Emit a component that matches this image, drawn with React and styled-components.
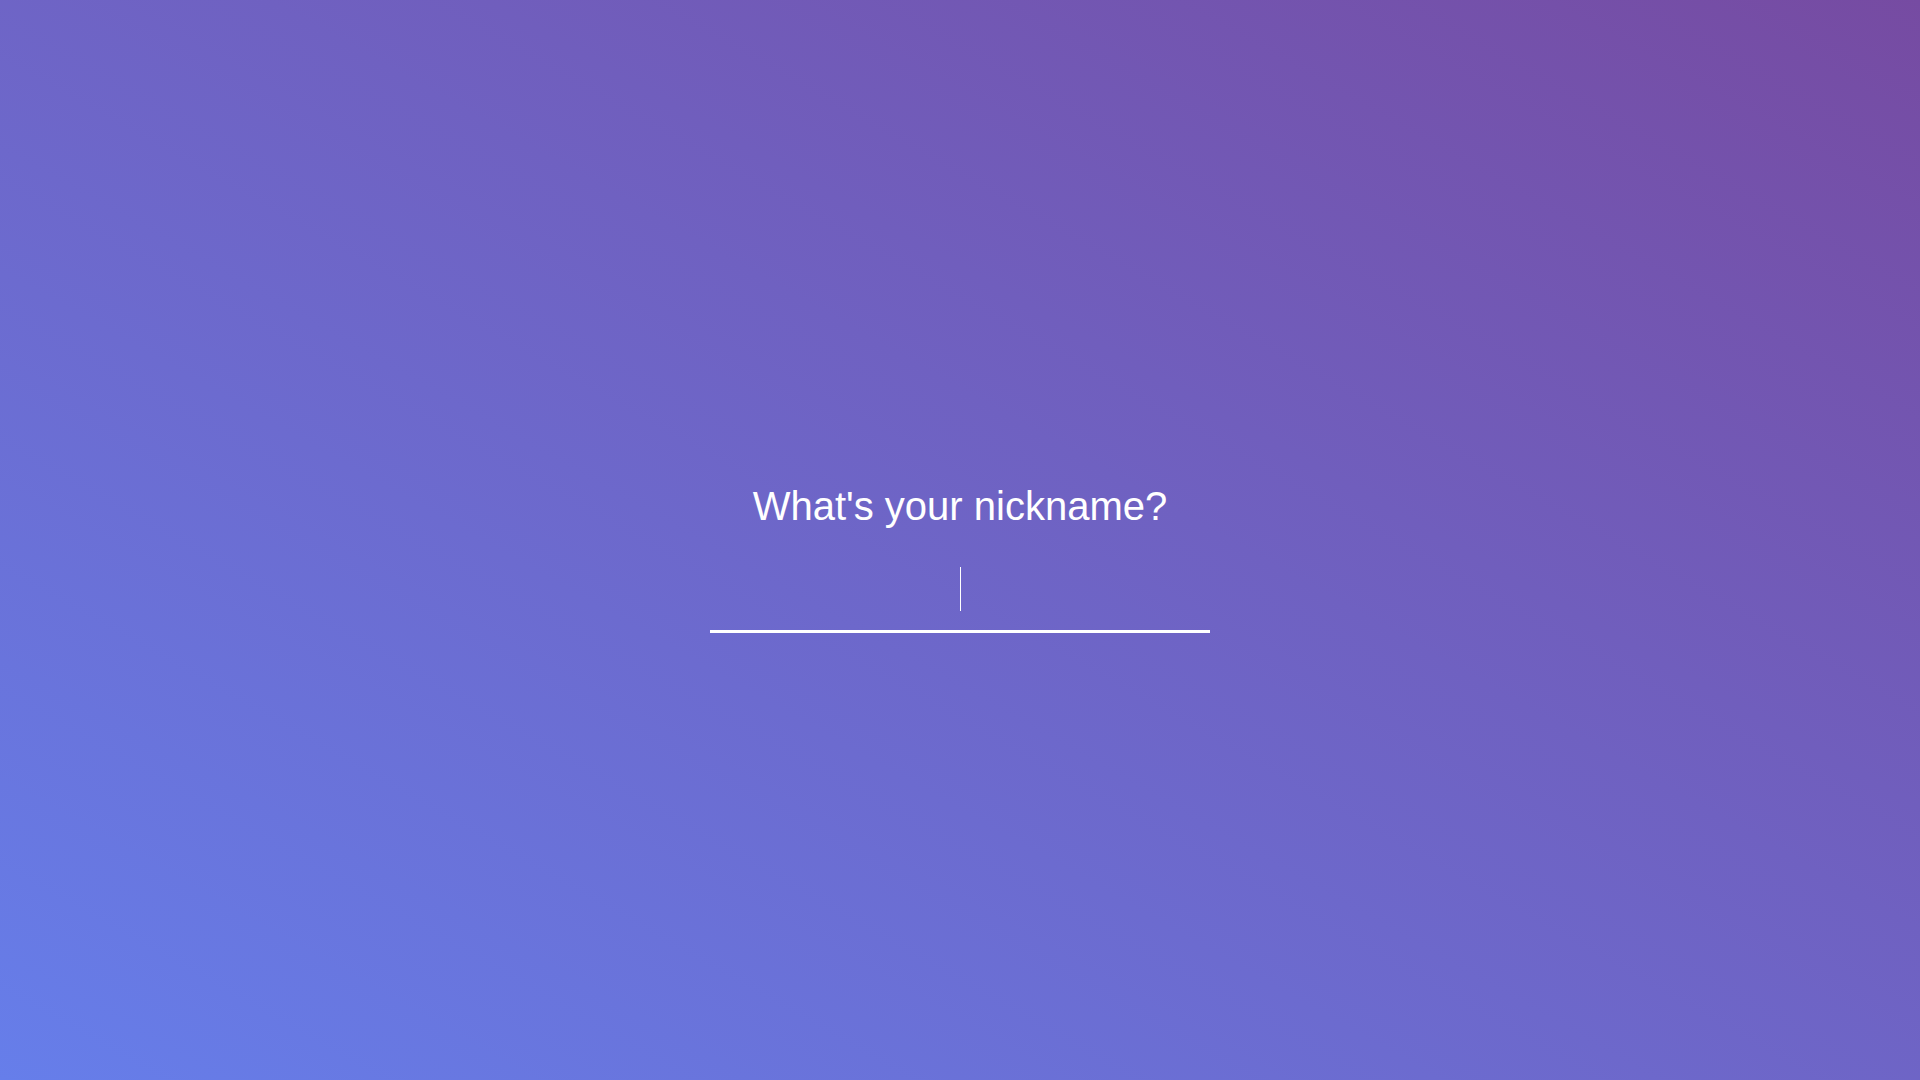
import React, { useState } from 'react'
import styled, { createGlobalStyle, keyframes } from 'styled-components'

const GlobalStyle = createGlobalStyle`
  html, body {
    margin: 0;
    padding: 0;
  }
  body {
    font-family: "Liberation Sans", Arial, sans-serif;
  }
`;

const blink = keyframes`
  0%, 49% { opacity: 1; }
  50%, 100% { opacity: 0; }
`;

const Page = styled.div`
  min-height: 100vh;
  box-sizing: border-box;
  padding-top: 36px;
  display: flex;
  flex-direction: column;
  align-items: center;
  justify-content: center;
  background: linear-gradient(to top right, #667eea 0%, #764ba2 100%);
  color: #fff;
`;

const Title = styled.h1`
  margin: 0 0 22px;
  font-size: 40px;
  font-weight: 400;
  line-height: normal;
  color: #fff;
`;

const Field = styled.div`
  position: relative;
  width: 500px;
`;

const NameInput = styled.input`
  display: block;
  width: 100%;
  box-sizing: border-box;
  padding: 16px 0 18px;
  border: none;
  border-bottom: 3px solid #fff;
  outline: none;
  background: transparent;
  color: #fff;
  caret-color: ${({ $empty }) => ($empty ? 'transparent' : '#fff')};
  font-family: "Liberation Sans", Arial, sans-serif;
  font-size: 40px;
  line-height: normal;
  text-align: center;
`;

// custom caret shown while the field is empty
const Caret = styled.span`
  position: absolute;
  left: 50%;
  top: 16px;
  width: 1px;
  height: 44px;
  background: #fff;
  pointer-events: none;
  animation: ${blink} 1.2s step-end infinite;
`;

const App = () => {
  const [nickname, setNickname] = useState('')

  return (
    <Page>
      <GlobalStyle />
      <Title>What's your nickname?</Title>
      <Field>
        <NameInput
          autoFocus
          $empty={nickname === ''}
          value={nickname}
          onChange={e => setNickname(e.target.value)}
        />
        {nickname === '' && <Caret />}
      </Field>
    </Page>
  )
};

export default App;
